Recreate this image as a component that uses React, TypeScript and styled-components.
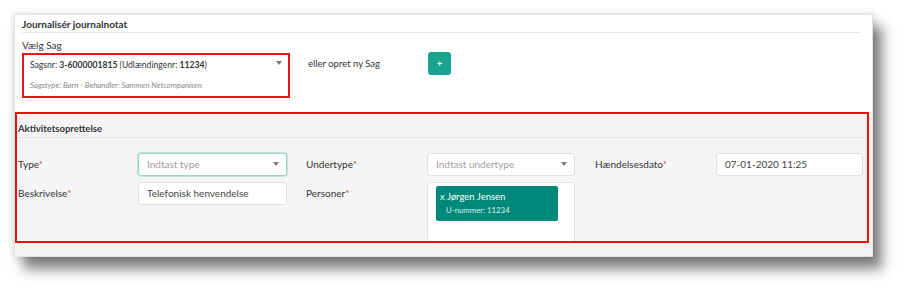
import styled, { createGlobalStyle } from 'styled-components'

const Global = createGlobalStyle`
  body {
    margin: 0;
    background: #fff;
    font-family: Lato, "Open Sans", sans-serif;
    color: #333;
  }
`

const Page = styled.div`
  padding: 14px 0 36px 14px;
  min-height: 293px;
  box-sizing: border-box;
`

const Card = styled.section`
  width: 857px;
  height: 241px;
  background: #fff;
  border: 1px solid #e2e2e2;
  box-shadow: 9px 12px 12px rgba(0, 0, 0, 0.5), 0 0 7px rgba(0, 0, 0, 0.15);
  display: flex;
  flex-direction: column;
`

const Top = styled.div`
  padding: 0 11px 0 7px;
  height: 97px;
`

const Heading = styled.h4`
  margin: 0;
  height: 17px;
  line-height: 18px;
  font-size: 10px;
  font-weight: 700;
  color: #333;
  border-bottom: 1px solid #e6e6e6;
`

const FieldLabel = styled.div`
  margin-top: 5px;
  font-size: 10px;
  line-height: 14px;
`

const SagRow = styled.div`
  display: flex;
  align-items: flex-start;
  margin-top: 1px;
`

const SagBox = styled.div`
  box-sizing: border-box;
  width: 268px;
  height: 45px;
  border: 2px solid #e8141b;
  padding: 0 8px 0 6px;
  position: relative;
`

const SagMain = styled.div`
  font-size: 8.6px;
  line-height: 12px;
  margin-top: 4px;
  color: #333;
  b {
    font-weight: 700;
  }
`

const SagSub = styled.div`
  font-size: 7.8px;
  font-style: italic;
  color: #8a8a8a;
  margin-top: 9px;
`

const Caret = styled.span`
  position: absolute;
  right: 6px;
  top: 6px;
  width: 0;
  height: 0;
  border-left: 3px solid transparent;
  border-right: 3px solid transparent;
  border-top: 4px solid #777;
`

const OrText = styled.div`
  font-size: 9.5px;
  margin: 5px 0 0 18px;
  width: 120px;
`

const PlusButton = styled.button`
  width: 23px;
  height: 23px;
  margin-top: -1px;
  border: none;
  border-radius: 3px;
  background: #17a38d;
  color: #fff;
  font-size: 9px;
  font-weight: 700;
  padding: 0;
  font-family: inherit;
`

const Bottom = styled.div`
  flex: 1;
  background: #f5f5f5;
  padding: 0 3px 13px 0;
  display: flex;
`

const Activity = styled.div`
  flex: 1;
  border: 2px solid #ee1010;
  overflow: hidden;
  padding: 0 1px 0 1px;
`

const SectionTitle = styled.div`
  font-size: 9.5px;
  font-weight: 700;
  height: 23px;
  line-height: 30px;
  border-bottom: 1px solid #e3e3e3;
  margin-bottom: 15px;
`

const Grid = styled.div`
  display: grid;
  grid-template-columns: 120px 149px 19px 121px 148px 20px 121px 147px;
  grid-template-rows: 23px 57px;
  row-gap: 6px;
  align-items: start;
`

const Label = styled.div<{ col: number }>`
  grid-column: ${(p) => p.col};
  font-size: 10px;
  line-height: 23px;
  color: #333;
  &::after {
    content: '*';
    color: #e04545;
  }
`

const Input = styled.div<{ col: number; focused?: boolean; muted?: boolean }>`
  grid-column: ${(p) => p.col};
  box-sizing: border-box;
  height: 23px;
  background: #fff;
  border: 1px solid ${(p) => (p.focused ? '#9fd3c9' : '#e1e1e1')};
  box-shadow: ${(p) => (p.focused ? '0 0 0 1px #c3e5df' : 'none')};
  border-radius: 3px;
  padding: 0 8px;
  font-size: 10px;
  line-height: 21px;
  color: ${(p) => (p.muted ? '#a0a0a0' : '#444')};
  position: relative;
`

const People = styled.div<{ col: number }>`
  grid-column: ${(p) => p.col};
  height: 60px;
  box-sizing: border-box;
  background: #fff;
  border: 1px solid #e1e1e1;
  border-radius: 3px;
  padding: 3px 16px 0 8px;
`

const Chip = styled.div`
  background: #00897a;
  color: #fff;
  border-radius: 2px;
  height: 35px;
  padding: 4px 0 0 4px;
  box-sizing: border-box;
`

const ChipName = styled.div`
  font-size: 9.5px;
  line-height: 13px;
`

const ChipSub = styled.div`
  font-size: 7.8px;
  line-height: 11px;
  margin: 2px 0 0 6px;
  color: #d9efec;
`

const SmallCaret = styled(Caret)`
  top: 8px;
  right: 7px;
`

export default function App() {
  return (
    <Page>
      <Global />
      <Card>
        <Top>
          <Heading>Journalisér journalnotat</Heading>
          <FieldLabel>Vælg Sag</FieldLabel>
          <SagRow>
            <SagBox>
              <SagMain>
                Sagsnr: <b>3-6000001815</b> (Udlændingenr: <b>11234</b>)
              </SagMain>
              <SagSub>Sagstype: Børn - Behandler: Sammen Netcompanisen</SagSub>
              <Caret />
            </SagBox>
            <OrText>eller opret ny Sag</OrText>
            <PlusButton>+</PlusButton>
          </SagRow>
        </Top>
        <Bottom>
          <Activity>
            <SectionTitle>Aktivitetsoprettelse</SectionTitle>
            <Grid>
              <Label col={1}>Type</Label>
              <Input col={2} focused muted>
                Indtast type
                <SmallCaret />
              </Input>
              <Label col={4}>Undertype</Label>
              <Input col={5} muted>
                Indtast undertype
                <SmallCaret />
              </Input>
              <Label col={7}>Hændelsesdato</Label>
              <Input col={8}>07-01-2020 11:25</Input>

              <Label col={1}>Beskrivelse</Label>
              <Input col={2}>Telefonisk henvendelse</Input>
              <Label col={4}>Personer</Label>
              <People col={5}>
                <Chip>
                  <ChipName>x Jørgen Jensen</ChipName>
                  <ChipSub>U-nummer: 11234</ChipSub>
                </Chip>
              </People>
            </Grid>
          </Activity>
        </Bottom>
      </Card>
    </Page>
  )
}
